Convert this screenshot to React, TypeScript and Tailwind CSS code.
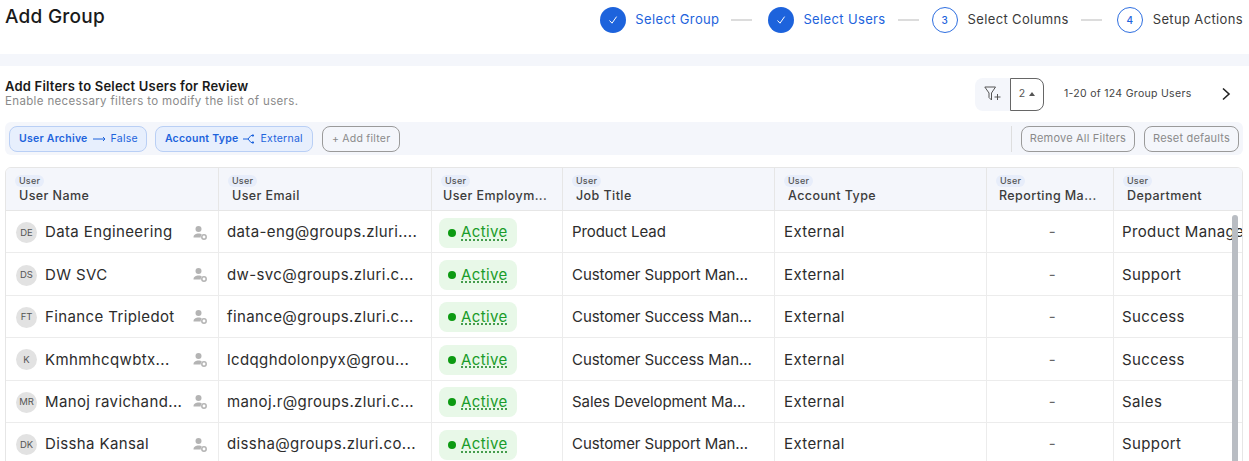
import React from "react";

const font = { fontFamily: "Inter, 'Liberation Sans', sans-serif" };

const rows = [
  ["DE", "Data Engineering", "data-eng@groups.zluri....", "Product Lead", "Product Manager"],
  ["DS", "DW SVC", "dw-svc@groups.zluri.c...", "Customer Support Man...", "Support"],
  ["FT", "Finance Tripledot", "finance@groups.zluri.c...", "Customer Success Man...", "Success"],
  ["K", "Kmhmhcqwbtx...", "lcdqghdolonpyx@grou...", "Customer Success Man...", "Success"],
  ["MR", "Manoj ravichand...", "manoj.r@groups.zluri.c...", "Sales Development Ma...", "Sales"],
  ["DK", "Dissha Kansal", "dissha@groups.zluri.co...", "Customer Support Man...", "Support"],
];

const headers: [string, string][] = [
  ["User Name", "w-[213px] pl-[13px]"],
  ["User Email", "w-[213px] pl-[13px]"],
  ["User Employm...", "w-[131px] pl-[11px]"],
  ["Job Title", "w-[212px] pl-[13px]"],
  ["Account Type", "w-[212px] pl-[13px]"],
  ["Reporting Ma...", "w-[127px] pl-[12px]"],
  ["Department", "flex-1 pl-[13px]"],
];

function Check() {
  return (
    <svg width="12" height="12" viewBox="0 0 12 12" fill="none" stroke="white" strokeWidth="1">
      <path d="M2.5 6.5 L5 9.2 L9.6 2.6" />
    </svg>
  );
}

function Step({ n, label, done, lineClass }: { n: string; label: string; done?: boolean; lineClass?: string }) {
  return (
    <div className="flex items-center">
      {done ? (
        <div className="w-[26px] h-[26px] rounded-full bg-[#1d63dc] flex items-center justify-center">
          <Check />
        </div>
      ) : (
        <div className="w-[26px] h-[26px] rounded-full border border-[#2f6fe0] flex items-center justify-center text-[10px] font-medium text-[#1d63dc]">
          {n}
        </div>
      )}
      <span className={`text-[13px] tracking-[0.36px] ${done ? "ml-[9px] text-[#1d63dc]" : "ml-[10px] text-[#3a3a3a]"}`}>{label}</span>
      {lineClass && <div className={`w-[21px] h-[2px] bg-[#dcdcdc] ml-[12px] ${lineClass}`} />}
    </div>
  );
}

function UserIcon() {
  return (
    <svg width="15" height="16" viewBox="0 0 15 16" fill="#b4b4b4">
      <circle cx="5.5" cy="4" r="3" />
      <path d="M0.5 12.5 C0.5 9.5 3 8.5 5.5 8.5 C7 8.5 8 8.8 8.8 9.4 C8 10.2 7.6 11.3 7.8 12.5 Z" />
      <circle cx="11" cy="12" r="2.2" fill="none" stroke="#b4b4b4" strokeWidth="1.5" />
    </svg>
  );
}

function Badge() {
  return (
    <span className="absolute left-[9px] top-[7px] h-[12px] px-[4px] rounded-full bg-[#e7edfa] text-[9px] leading-[12px] tracking-[0.2px] text-[#555]">
      User
    </span>
  );
}

export default function App() {
  return (
    <div className="w-[1249px] h-[461px] overflow-hidden bg-white relative" style={font}>
      <header className="h-[54px] flex justify-between pl-[5px] pr-[6px]">
        <h1 className="text-[19px] leading-[24px] mt-[5px] font-medium text-[#1a1a1a] tracking-[0.25px]">Add Group</h1>
        <div className="flex items-start pt-[7px]">
          <Step n="1" label="Select Group" done lineClass="mr-[16px]" />
          <Step n="2" label="Select Users" done lineClass="mr-[13px]" />
          <Step n="3" label="Select Columns" lineClass="mr-[15px]" />
          <Step n="4" label="Setup Actions" />
        </div>
      </header>
      <div className="h-[12px] bg-[#f4f6fb]" />

      <section className="h-[56px] flex justify-between pl-[5px]">
        <div className="pt-[12px]">
          <div className="text-[13px] leading-[16px] font-semibold text-[#1a1a1a] tracking-[0.2px]">Add Filters to Select Users for Review</div>
          <div className="text-[11.5px] leading-[14px] text-[#8a8a8a] tracking-[0.35px]">Enable necessary filters to modify the list of users.</div>
        </div>
        <div className="flex items-center">
          <div className="flex h-[33px] rounded-[8px] bg-[#f4f6fb]">
            <div className="w-[35px] flex items-center justify-center">
              <svg width="18" height="16" viewBox="0 0 18 16" fill="none" stroke="#555" strokeWidth="1">
                <path d="M0.8 1 H11.5 L7.5 7 V14 L5 11.5 V7 Z" />
                <path d="M10.5 11 H16.5 M13.5 8 V14" />
              </svg>
            </div>
            <div className="w-[34px] border border-[#666] rounded-r-[8px] bg-white flex items-center justify-center gap-[4px] text-[10.5px] text-[#555]">
              2
              <span className="w-0 h-0 border-x-[3.5px] border-x-transparent border-b-[4px] border-b-[#555]" />
            </div>
          </div>
          <span className="ml-[20px] text-[10.5px] tracking-[0.3px] text-[#444] w-[130px] whitespace-nowrap">1-20 of 124 Group Users</span>
          <svg className="ml-[27px] mr-[18px]" width="10" height="14" viewBox="0 0 10 14" fill="none" stroke="#222" strokeWidth="1.6">
            <path d="M2 1.5 L8 7 L2 12.5" />
          </svg>
        </div>
      </section>

      <div className="ml-[5px] mr-[6px] h-[33px] rounded-[6px] bg-[#f4f6fb] flex items-center pl-[4px] pr-[4px] text-[10.5px] tracking-[0.25px]">
        <div className="h-[26px] flex items-center gap-[5px] rounded-[8px] border border-[#b9cff5] bg-[#e7effd] pl-[9px] pr-[8px]">
          <span className="font-semibold text-[#1d63dc]">User Archive</span>
          <svg width="13" height="6" viewBox="0 0 13 6" fill="none" stroke="#1d63dc" strokeWidth="1"><path d="M0 3 H12 M10 1 L12 3 L10 5" /></svg>
          <span className="text-[#1d63dc]">False</span>
        </div>
        <div className="ml-[8px] h-[26px] flex items-center gap-[5px] rounded-[8px] border border-[#b9cff5] bg-[#e7effd] px-[9px]">
          <span className="font-semibold text-[#1d63dc]">Account Type</span>
          <svg width="12" height="10" viewBox="0 0 12 10" fill="none" stroke="#1d63dc" strokeWidth="1"><path d="M0 5 H5 L8 1.5 H11 M5 5 L8 8.5 H11 M9.5 0.5 L11 1.5 L9.5 2.5 M9.5 7.5 L11 8.5 L9.5 9.5" /></svg>
          <span className="text-[#1d63dc]">External</span>
        </div>
        <div className="ml-[9px] h-[26px] flex items-center rounded-[8px] border border-[#9a9a9a] px-[9px] text-[#8a8a8a]">+ Add filter</div>
        <div className="ml-auto h-[26px] border-l border-[#dedede] pl-[9px] flex items-center gap-[9px] text-[#8a8a8a] text-[11px] tracking-[0.2px]">
          <div className="h-[26px] flex items-center rounded-[8px] border border-[#9a9a9a] px-[8px]">Remove All Filters</div>
          <div className="h-[26px] flex items-center rounded-[8px] border border-[#9a9a9a] px-[8px]">Reset defaults</div>
        </div>
      </div>

      <div className="relative ml-[5px] mr-[6px] mt-[12px] h-[300px] rounded-t-[6px] border border-[#e6e6e6] overflow-hidden">
        <div className="flex h-[43px] bg-[#f4f6fb] border-b border-[#e6e6e6]">
          {headers.map(([h, w]) => (
            <div key={h} className={`relative ${w} border-r last:border-r-0 border-[#e6e6e6] pt-[20px] text-[12.5px] leading-[16px] tracking-[0.42px] font-medium text-[#3c3c3c] whitespace-nowrap`}>
              <Badge />
              {h}
            </div>
          ))}
        </div>
        {rows.map((r) => (
          <div key={r[0]} className="flex h-[42.4px] border-b border-[#ececec] text-[15px] tracking-[0.38px] text-[#2c2c2c] whitespace-nowrap">
            <div className="w-[213px] pt-[2px] border-r border-[#ececec] flex items-center pl-[10px]">
              <span className="w-[21px] h-[21px] rounded-full bg-[#e2e2e2] flex items-center justify-center text-[9.5px] tracking-normal text-[#555]">{r[0]}</span>
              <span className="ml-[8px] flex-1">{r[1]}</span>
              <span className="mr-[10px]"><UserIcon /></span>
            </div>
            <div className="w-[213px] pt-[2px] border-r border-[#ececec] flex items-center pl-[8px]">{r[2]}</div>
            <div className="w-[131px] pt-[2px] border-r border-[#ececec] flex items-center pl-[7px]">
              <span className="h-[30px] w-[78px] rounded-[8px] bg-[#e8f8e8] flex items-center pl-[9px] text-[#1a9c2a]">
                <span className="w-[8px] h-[8px] rounded-full bg-[#0c9a12] mr-[5px] shrink-0" />
                <span className="underline decoration-dotted decoration-[#0f7d1a] underline-offset-2">Active</span>
              </span>
            </div>
            <div className="w-[212px] pt-[2px] border-r border-[#ececec] flex items-center pl-[9px] tracking-[-0.08px]">{r[3]}</div>
            <div className="w-[212px] pt-[2px] border-r border-[#ececec] flex items-center pl-[9px]">External</div>
            <div className="w-[127px] pt-[2px] border-r border-[#ececec] flex items-center justify-center pl-[5px] text-[#666]">-</div>
            <div className="flex-1 pt-[2px] flex items-center pl-[8px] overflow-hidden">{r[4]}</div>
          </div>
        ))}
        <div className="absolute right-[4px] top-[47px] bottom-0 w-[6px] rounded-full bg-[#b9bdc3]" />
      </div>
    </div>
  );
}
